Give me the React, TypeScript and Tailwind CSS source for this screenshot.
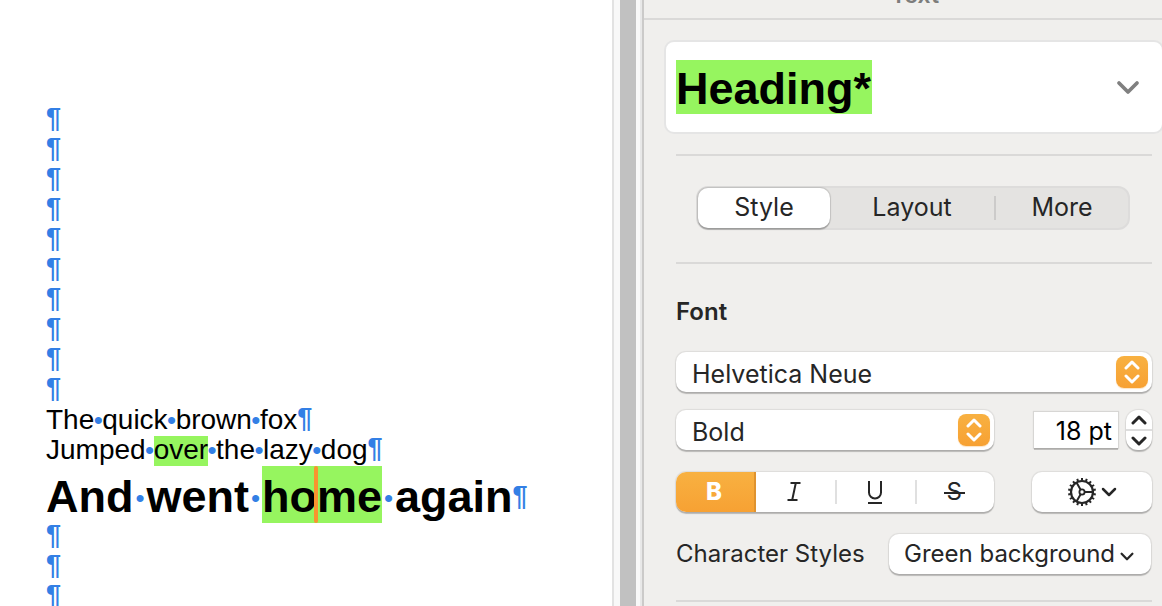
import type { ReactNode } from "react";

const EMPTY_BEFORE = Array.from({ length: 10 }, (_, i) => i);
const EMPTY_AFTER = Array.from({ length: 3 }, (_, i) => i);
const TEETH = Array.from({ length: 18 }, (_, i) => i * 20);

const controlShadow = "shadow-[0_0_1px_1px_rgba(0,0,0,0.08),0_2px_1px_rgba(0,0,0,0.22)]";

function Pilcrow() {
  return <span className="align-[2px] text-[27px] leading-none font-bold text-[#337fe5]">¶</span>;
}

function Dot({ wide = false }: { wide?: boolean }) {
  return (
    <span
      className={
        wide
          ? "inline-flex w-[13px] justify-center align-[5px] text-[26px] leading-none font-normal text-[#337fe5]"
          : "inline-flex w-2 justify-center text-[26px] leading-none text-[#337fe5]"
      }
    >
      •
    </span>
  );
}

function EmptyLine() {
  return (
    <p className="h-[30px] leading-[28px]">
      <Pilcrow />
    </p>
  );
}

function Chevron({ className, up = false, width = 3 }: { className: string; up?: boolean; width?: number }) {
  return (
    <svg viewBox="0 0 16 10" className={className} fill="none" stroke="currentColor" strokeWidth={width} strokeLinecap="round" strokeLinejoin="round" aria-hidden="true">
      <path d={up ? "M2 8 8 2l6 6" : "M2 2l6 6 6-6"} />
    </svg>
  );
}

function PopUp({ label, options, className }: { label: string; options: string[]; className: string }) {
  return (
    <div className={`relative h-10 rounded-[10px] bg-white ${controlShadow} ${className}`}>
      <select aria-label={label} className="h-10 w-full appearance-none rounded-[10px] bg-transparent pt-1 pr-10 pl-4 text-[25px] leading-9 outline-none">
        {options.map((o) => (
          <option key={o}>{o}</option>
        ))}
      </select>
      <span className="pointer-events-none absolute top-1 right-1 flex size-8 flex-col items-center justify-center gap-1 rounded-lg bg-linear-to-b from-[#f8b141] to-[#f7a133] text-white shadow-[0_1px_1px_rgba(247,161,51,0.3)]">
        <Chevron up className="h-[10px] w-4" />
        <Chevron className="h-[10px] w-4" />
      </span>
    </div>
  );
}

function Gear() {
  return (
    <svg viewBox="-15 -15 30 30" className="size-[30px]" fill="none" stroke="currentColor" strokeWidth="2" aria-hidden="true">
      <circle r="11" strokeWidth="2.2" />
      <circle r="2.6" strokeWidth="1.8" />
      <path d="M3 0H11M-1.5 -2.6-5.5 -9.5M-1.5 2.6-5.5 9.5" />
      {TEETH.map((a) => (
        <path key={a} d="M11.5 0H14" transform={`rotate(${a + 10})`} />
      ))}
    </svg>
  );
}

function FormatButton({ label, children, separated = false }: { label: string; children: ReactNode; separated?: boolean }) {
  return (
    <button type="button" aria-label={label} className="relative flex h-10 flex-1 items-center justify-center">
      {separated && <span className="absolute top-2 left-0 h-6 w-0.5 bg-[#e0e0e0]" />}
      {children}
    </button>
  );
}

function Divider({ className = "" }: { className?: string }) {
  return <hr className={`mr-2.5 ml-8 border-t-2 border-[#dad9d8] ${className}`} />;
}

function Inspector() {
  return (
    <aside className="w-[518px] shrink-0 overflow-hidden bg-[#f0efed] font-[Inter,sans-serif] text-[#262626]">
      <header className="flex h-5 items-end justify-center overflow-hidden border-b-2 border-[#dad9d8] pr-[2px] pl-[26px]">
        <h1 className="mb-[11px] text-[23px] leading-6 font-semibold text-[#7d7d7c]">Text</h1>
      </header>

      <button type="button" className="mt-5 -mr-0.5 ml-5 flex h-[94px] w-[500px] items-center justify-between rounded-[10px] border-2 border-[#e5e5e5] bg-white pr-[22px] pl-2.5">
        <span className="h-[54px] bg-[#96f55f] pr-px font-['Liberation_Sans',Arial,sans-serif] text-[45px] leading-[58px] font-bold text-black">Heading*</span>
        <Chevron className="h-[15px] w-6 text-[#808080]" width={2.5} />
      </button>

      <Divider className="mt-5" />

      <div className="mt-[30px] mr-8 ml-[52px] flex h-11 items-center rounded-xl border-2 border-[#dddcdb] bg-[#e4e3e1] text-[25px] leading-9">
        <button type="button" aria-pressed="true" className="h-10 flex-[132] rounded-[10px] bg-white pb-0.5 shadow-[0_0_1px_1px_rgba(0,0,0,0.13),0_2px_1px_rgba(0,0,0,0.2)]">
          Style
        </button>
        <button type="button" className="h-10 flex-[164] pb-0.5">Layout</button>
        <span className="h-6 w-0.5 bg-[#cccbca]" />
        <button type="button" className="h-10 flex-[132] pb-0.5">More</button>
      </div>

      <Divider className="mt-8" />

      <section className="mr-2.5 ml-8">
        <h2 className="mt-8 text-2xl font-semibold">Font</h2>

        <PopUp label="Font family" options={["Helvetica Neue", "Helvetica", "Arial"]} className="mt-6" />

        <div className="mt-[18px] flex items-center">
          <PopUp label="Typeface" options={["Bold", "Regular", "Italic"]} className="flex-1" />
          <input
            aria-label="Font size"
            defaultValue="18 pt"
            className="ml-10 h-9 w-[84px] bg-white pt-1 pr-1.5 text-right text-[25px] text-black shadow-[0_0_1px_1px_rgba(0,0,0,0.1),0_2px_0_rgba(0,0,0,0.2)] outline-none"
          />
          <div className={`ml-2 flex h-10 w-[26px] flex-col rounded-xl bg-white ${controlShadow}`}>
            <button type="button" aria-label="Increase font size" className="flex flex-1 items-center justify-center border-b-2 border-[#dddddd]">
              <Chevron up className="h-[10px] w-4" />
            </button>
            <button type="button" aria-label="Decrease font size" className="flex flex-1 items-center justify-center">
              <Chevron className="h-[10px] w-4" />
            </button>
          </div>
        </div>

        <div className="mt-[22px] flex items-center">
          <div className={`flex flex-1 overflow-hidden rounded-[10px] bg-white ${controlShadow}`}>
            <button type="button" aria-label="Bold" aria-pressed="true" className="h-10 w-20 border-r-2 border-[#df932f] bg-linear-to-b from-[#f8b141] to-[#f7a133] pr-0.5 text-2xl font-extrabold text-white">
              B
            </button>
            <FormatButton label="Italic">
              <svg viewBox="0 0 14 20" className="mr-1 h-5 w-3.5" fill="none" stroke="currentColor" strokeWidth="2" aria-hidden="true">
                <path d="M3.5 1H13.5M.5 18H10.5M8.8 1 5.2 18" />
              </svg>
            </FormatButton>
            <FormatButton label="Underline" separated>
              <svg viewBox="0 0 18 24" className="h-6 w-[18px]" fill="none" stroke="currentColor" strokeWidth="2" aria-hidden="true">
                <path d="M3 1V12.5A6 6 0 0 0 15 12.5V1M2 23H16" />
              </svg>
            </FormatButton>
            <FormatButton label="Strikethrough" separated>
              <span className="relative text-2xl">
                S
                <span className="absolute inset-x-[-3px] top-1/2 h-0.5 bg-current" />
              </span>
            </FormatButton>
          </div>
          <button type="button" aria-label="Advanced options" className={`ml-[38px] flex h-10 w-[120px] items-center justify-center gap-1 rounded-[10px] bg-white ${controlShadow}`}>
            <Gear />
            <Chevron className="h-[10px] w-4" width={2.5} />
          </button>
        </div>

        <div className="mt-[22px] flex items-center justify-between">
          <label htmlFor="character-style" className="text-2xl">Character Styles</label>
          <div className={`relative mr-px h-10 w-[262px] rounded-[10px] bg-white ${controlShadow}`}>
            <select id="character-style" className="h-10 w-full appearance-none rounded-[10px] bg-transparent pr-8 pl-[15px] text-2xl outline-none">
              <option>Green background</option>
              <option>None</option>
            </select>
            <Chevron className="pointer-events-none absolute top-[18px] right-4 h-[9px] w-4" width={2.5} />
          </div>
        </div>
      </section>

      <Divider className="mt-[26px]" />
    </aside>
  );
}

export default function App() {
  return (
    <div className="flex h-screen overflow-hidden bg-white">
      <main className="min-w-0 flex-1 overflow-hidden pt-[105px] pl-[46px] font-['Liberation_Sans',Arial,sans-serif] text-[28px] whitespace-nowrap text-black">
        {EMPTY_BEFORE.map((i) => (
          <EmptyLine key={i} />
        ))}
        <p className="h-[30px] leading-[28px]">
          The<Dot />quick<Dot />brown<Dot />fox<Pilcrow />
        </p>
        <p className="h-[30px] leading-[28px]">
          Jumped<Dot />
          <mark className="inline-block h-[30px] bg-[#96f55f] text-black">over</mark>
          <Dot />the<Dot />lazy<Dot />dog<Pilcrow />
        </p>
        <h2 className="mt-px -mb-px flex h-[57px] text-[45px] leading-[62px] font-bold">
          <span>And<Dot wide />went<Dot wide /></span>
          <mark className="relative h-[57px] bg-[#96f55f] text-black">
            ho
            <span className="absolute inset-y-0 left-[52px] w-1 rounded-full bg-[#f9942f]" />
            me
          </mark>
          <span><Dot wide />again<span className="align-[5px] leading-none"><Pilcrow /></span></span>
        </h2>
        {EMPTY_AFTER.map((i) => (
          <EmptyLine key={i} />
        ))}
      </main>
      <div className="w-2 shrink-0 border-l-2 border-[#e2e2e2] bg-[#f8f8f8]" />
      <div className="w-4 shrink-0 bg-[#c1c1c1]" />
      <div className="w-1 shrink-0 bg-[#f8f8f8]" />
      <div className="w-1 shrink-0 border-r-2 border-[#cbcac9] bg-[#e8e8e8]" />
      <Inspector />
    </div>
  );
}
